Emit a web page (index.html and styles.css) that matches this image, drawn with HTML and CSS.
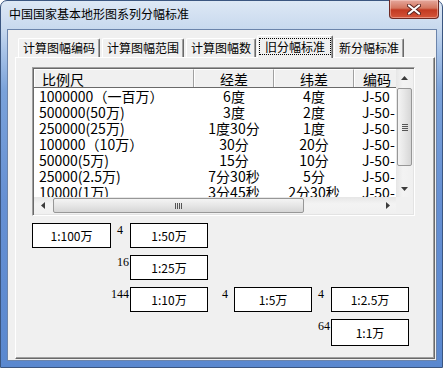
FILE: index.html
```html
<!DOCTYPE html>
<html>
<head>
  <meta charset="utf-8">
  <link rel="stylesheet" href="styles.css">
</head>
<body>
  <div class="window">
    <div class="titlebar">
      <span class="title">中国国家基本地形图系列分幅标准</span>
      <div class="close-btn">
        <svg width="14" height="11" viewBox="0 0 14 11">
          <path d="M2 1.5 L12 9.5 M12 1.5 L2 9.5" stroke="#5a2420" stroke-width="4" stroke-linecap="round"/>
          <path d="M2 1.5 L12 9.5 M12 1.5 L2 9.5" stroke="#fff" stroke-width="2.2" stroke-linecap="round"/>
        </svg>
      </div>
    </div>

    <div class="client">
      <!-- tab strip -->
      <div class="tabs">
        <div class="tab">计算图幅编码</div>
        <div class="tab">计算图幅范围</div>
        <div class="tab">计算图幅数</div>
        <div class="tab active"><span class="focus">旧分幅标准</span></div>
        <div class="tab">新分幅标准</div>
      </div>

      <div class="panel">
        <div class="listview">
          <div class="lv-main">
            <div class="lv-head">
              <div class="hcell c1">比例尺</div>
              <div class="hcell c2">经差</div>
              <div class="hcell c3">纬差</div>
              <div class="hcell c4">编码</div>
            </div>
            <div class="lv-rows">
              <div class="lv-row"><span class="c1">1000000（一百万）</span><span class="c2">6度</span><span class="c3">4度</span><span class="c4">J-50</span></div>
              <div class="lv-row"><span class="c1">500000(50万)</span><span class="c2">3度</span><span class="c3">2度</span><span class="c4">J-50-</span></div>
              <div class="lv-row"><span class="c1">250000(25万)</span><span class="c2">1度30分</span><span class="c3">1度</span><span class="c4">J-50-</span></div>
              <div class="lv-row"><span class="c1">100000（10万）</span><span class="c2">30分</span><span class="c3">20分</span><span class="c4">J-50-</span></div>
              <div class="lv-row"><span class="c1">50000(5万)</span><span class="c2">15分</span><span class="c3">10分</span><span class="c4">J-50-</span></div>
              <div class="lv-row"><span class="c1">25000(2.5万)</span><span class="c2">7分30秒</span><span class="c3">5分</span><span class="c4">J-50-</span></div>
              <div class="lv-row"><span class="c1">10000(1万)</span><span class="c2">3分45秒</span><span class="c3">2分30秒</span><span class="c4">J-50-</span></div>
            </div>
          </div>

          <div class="vscroll">
            <div class="arrow">
              <svg width="7" height="4" viewBox="0 0 7 4"><path d="M0 4 L3.5 0 L7 4 Z" fill="#3c3c3c"/></svg>
            </div>
            <div class="vtrack">
              <div class="vthumb"><span class="grip-v"></span></div>
            </div>
            <div class="arrow">
              <svg width="7" height="4" viewBox="0 0 7 4"><path d="M0 0 L3.5 4 L7 0 Z" fill="#3c3c3c"/></svg>
            </div>
          </div>

          <div class="hscroll">
            <div class="arrow">
              <svg width="4" height="7" viewBox="0 0 4 7"><path d="M4 0 L0 3.5 L4 7 Z" fill="#3c3c3c"/></svg>
            </div>
            <div class="htrack">
              <div class="hthumb"><span class="grip-h"></span></div>
            </div>
            <div class="arrow">
              <svg width="4" height="7" viewBox="0 0 4 7"><path d="M0 0 L4 3.5 L0 7 Z" fill="#3c3c3c"/></svg>
            </div>
          </div>
          <div class="corner"></div>
        </div>

        <!-- scale tree -->
        <div class="scales">
          <div class="box r1 k1">1:100万</div>
          <div class="num r1 k2">4</div>
          <div class="box r1 k3">1:50万</div>

          <div class="num r2 k2">16</div>
          <div class="box r2 k3">1:25万</div>

          <div class="num wide r3 k2">144</div>
          <div class="box r3 k3">1:10万</div>
          <div class="num far r3 k4">4</div>
          <div class="box r3 k5">1:5万</div>
          <div class="num r3 k6">4</div>
          <div class="box r3 k7">1:2.5万</div>

          <div class="num r4 k6">64</div>
          <div class="box tall r4 k7">1:1万</div>
        </div>
      </div>
    </div>
  </div>
</body>
</html>
```

FILE: styles.css
```css
body {
  margin: 0;
  font-family: "Noto Sans CJK SC", sans-serif;
  font-size: 12px;
  color: #000;
}

.window {
  box-sizing: border-box;
  width: 443px;
  height: 368px;
  display: flex;
  flex-direction: column;
  padding: 0 5px 6px 6px;
  border: 1px solid #3b5680;
  border-radius: 7px 7px 0 0;
  background: linear-gradient(to bottom, #dde8f5 0, #c8d9ee 28px, #a9c4e8 50px, #7aa2da 90px, #6690d3 200px, #5a88cf 100%);
}

.titlebar {
  height: 28px;
  display: flex;
  justify-content: space-between;
  align-items: flex-start;
}

.title {
  margin: 5px 0 0 2px;
  line-height: 16px;
  font-size: 12px;
}

.close-btn {
  width: 48px;
  height: 18px;
  margin-top: -1px;
  margin-right: -2px;
  display: flex;
  align-items: center;
  justify-content: center;
  border: 1px solid #6e2a24;
  border-top: none;
  border-radius: 0 0 4px 4px;
  background: linear-gradient(to bottom, #e5a89d 0, #d4765f 45%, #c23a22 55%, #d5553a 100%);
  box-shadow: inset 0 0 0 1px rgba(255, 220, 210, 0.45);
}

.client {
  flex: 1;
  display: flex;
  flex-direction: column;
  padding: 5px 1px 1px 7px;
  border: 1px solid #6b84ab;
  background: #f0f0f0;
}

/* tabs */
.tabs {
  height: 22px;
  display: flex;
  align-items: flex-end;
  gap: 2px;
  padding-left: 3px;
}

.tab {
  height: 18px;
  line-height: 18px;
  padding: 0 4px;
  border: 1px solid #fff;
  border-right-color: #696969;
  border-bottom: none;
  border-radius: 2px 2px 0 0;
  box-shadow: inset -1px 0 0 #a0a0a0;
  white-space: nowrap;
}

.tab.active {
  position: relative;
  z-index: 1;
  height: 22px;
  margin: 0 -1px -1px -1px;
  padding: 0 1px;
  background: #f0f0f0;
  line-height: 20px;
}

.focus {
  display: inline-block;
  margin-top: 2px;
  line-height: 15px;
  padding: 0 5px;
  border: 1px dotted #000;
}

.panel {
  flex: 1;
  padding: 9px 0 0 16px;
  border: 1px solid #fff;
  border-right-color: #696969;
  border-bottom-color: #696969;
  box-shadow: inset -1px -1px 0 #a0a0a0;
}

/* list view */
.listview {
  box-sizing: border-box;
  width: 383px;
  height: 149px;
  display: grid;
  grid-template-columns: 1fr 17px;
  grid-template-rows: 1fr 17px;
  border: 1px solid;
  border-color: #a0a0a0 #fff #fff #a0a0a0;
  box-shadow: inset 1px 1px 0 #696969, inset -1px -1px 0 #e3e3e3;
  padding: 1px;
  background: #fff;
}

.lv-main {
  overflow: hidden;
  font-size: 14px;
}

.lv-head {
  display: flex;
  height: 19px;
  background: #f0f0f0;
  border-bottom: 1px solid #696969;
  box-sizing: border-box;
}

.hcell {
  flex: none;
  box-sizing: border-box;
  line-height: 18px;
  border-left: 1px solid #fff;
  border-top: 1px solid #fff;
  border-right: 1px solid #a0a0a0;
  box-shadow: 1px 0 0 #696969;
  white-space: nowrap;
}

.c1 { width: 160px; padding-left: 6px; }
.c2 { width: 80px; text-align: center; }
.c3 { width: 80px; text-align: center; }
.c4 { width: 42px; padding-left: 8px; overflow: hidden; }

.hcell.c1 { padding-left: 7px; }
.hcell.c4 { width: 60px; }

.lv-rows {
  height: 109px;
  overflow: hidden;
}

.lv-row {
  display: flex;
  height: 16px;
  line-height: 16px;
  white-space: nowrap;
}

.lv-row span {
  flex: none;
  box-sizing: border-box;
}

.lv-row .c1 { padding-left: 5px; }

/* scroll bars */
.vscroll {
  grid-row: 1;
  grid-column: 2;
  display: flex;
  flex-direction: column;
  background: linear-gradient(to right, #e6e6e6, #f3f3f3 40%, #f0f0f0);
}

.arrow {
  flex: none;
  width: 17px;
  height: 17px;
  display: flex;
  align-items: center;
  justify-content: center;
}

.vtrack {
  flex: 1;
  padding-top: 2px;
}

.vthumb {
  box-sizing: border-box;
  width: 15px;
  height: 78px;
  margin-left: 1px;
  border: 1px solid #979797;
  border-radius: 2px;
  background: linear-gradient(to right, #f4f4f4, #e6e6e6 50%, #d6d6d6);
  display: flex;
  align-items: center;
  justify-content: center;
}

.grip-v {
  width: 6px;
  height: 7px;
  background: repeating-linear-gradient(to bottom, #555 0, #555 1px, transparent 1px, transparent 2px);
}

.hscroll {
  grid-row: 2;
  grid-column: 1;
  display: flex;
  background: linear-gradient(to bottom, #e6e6e6, #f3f3f3 40%, #f0f0f0);
}

.htrack {
  flex: 1;
  padding-left: 2px;
}

.hthumb {
  box-sizing: border-box;
  width: 251px;
  height: 15px;
  margin-top: 1px;
  border: 1px solid #979797;
  border-radius: 2px;
  background: linear-gradient(to bottom, #f4f4f4, #e6e6e6 50%, #d6d6d6);
  display: flex;
  align-items: center;
  justify-content: center;
}

.grip-h {
  width: 7px;
  height: 6px;
  background: repeating-linear-gradient(to right, #555 0, #555 1px, transparent 1px, transparent 2px);
}

.corner {
  grid-row: 2;
  grid-column: 2;
  background: #f0f0f0;
}

/* scale tree */
.scales {
  display: grid;
  grid-template-columns: 79px 19px 78px 26px 78px 19px 78px;
  grid-template-rows: 25px 25px 25px 27px;
  row-gap: 7px;
  margin-top: 7px;
}

.box {
  box-sizing: border-box;
  border: 1px solid #000;
  background: #fff;
  display: flex;
  align-items: center;
  justify-content: center;
  font-size: 12px;
  line-height: 14px;
}

.num {
  font-family: "Liberation Serif", serif;
  font-size: 12px;
  line-height: 12px;
  color: #000;
  margin: 1px 0 0 6px;
  white-space: nowrap;
}

.num.wide { margin-left: 0; }
.num.far { margin-left: 14px; }

.r1 { grid-row: 1; }
.r2 { grid-row: 2; }
.r3 { grid-row: 3; }
.r4 { grid-row: 4; }
.k1 { grid-column: 1; }
.k2 { grid-column: 2; }
.k3 { grid-column: 3; }
.k4 { grid-column: 4; }
.k5 { grid-column: 5; }
.k6 { grid-column: 6; }
.k7 { grid-column: 7; }
```
